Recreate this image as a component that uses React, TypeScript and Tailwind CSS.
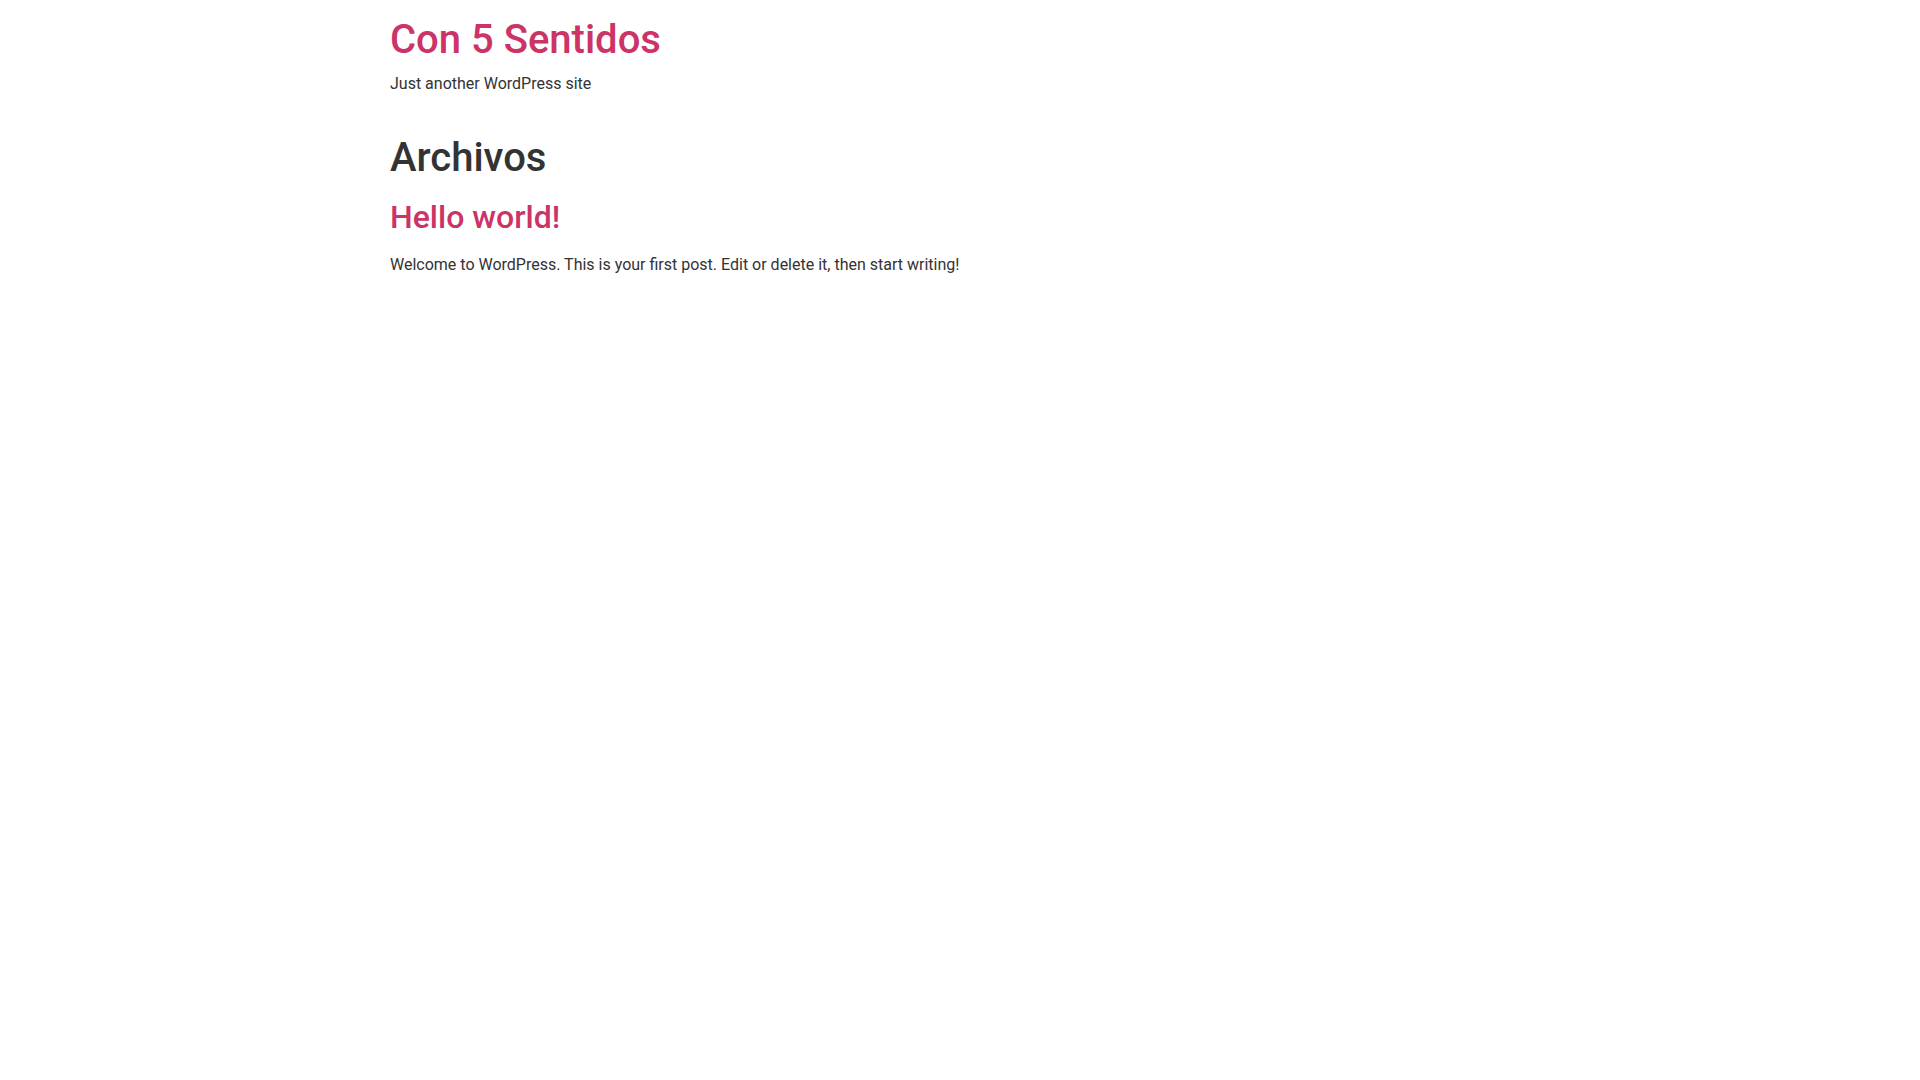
export default function App() {
  return (
    <div className="min-h-screen bg-white font-['Roboto',sans-serif] text-[#333]">
      <header className="mx-auto max-w-[1140px] pt-4">
        <p className="text-[40px] font-medium leading-[1.2] text-[#c36]">Con 5 Sentidos</p>
        <p className="mt-[8px] text-base leading-6">Just another WordPress site</p>
      </header>

      <main className="mx-auto max-w-[1140px]">
        <h1 className="mt-[38px] text-[40px] font-medium leading-[1.2]">Archivos</h1>

        <article className="mt-[16px]">
          <h2 className="text-[32px] font-medium leading-[1.2] text-[#c36]">Hello world!</h2>
          <p className="mt-[17px] text-base leading-6">
            Welcome to WordPress. This is your first post. Edit or delete it, then start writing!
          </p>
        </article>
      </main>
    </div>
  );
}
